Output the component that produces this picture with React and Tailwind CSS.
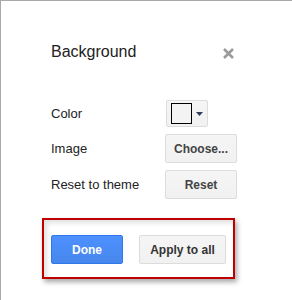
export default function App() {
  return (
    <div className="w-[292px] h-[300px] bg-white border-t border-l border-[#a9a9a9] pl-[50px] pt-[41px] font-['Liberation_Sans',Arial,sans-serif] overflow-hidden">
      <div className="flex items-start w-[183px] justify-between">
        <div className="text-[16px] leading-[20px] text-[#222]">Background</div>
        <svg className="mt-[6px]" width="11" height="11" viewBox="0 0 11 11">
          <path d="M1 1 L10 10 M10 1 L1 10" stroke="#9a9a9a" strokeWidth="2.6" />
        </svg>
      </div>
      <div className="mt-[38px] grid grid-cols-[114px_auto] gap-y-[7px] items-center text-[13px] text-[#222]">
        <div className="leading-none">Color</div>
        <div className="ml-px w-[42px] h-[27px] rounded-[2px] border border-[#dcdcdc] bg-gradient-to-b from-[#f5f5f5] to-[#f1f1f1] flex items-center pl-[4px]">
          <div className="w-[21px] h-[21px] border border-black bg-[#f3f3f3]"></div>
          <svg className="ml-[4px]" width="7" height="4" viewBox="0 0 7 4">
            <path d="M0 0 L7 0 L3.5 4 Z" fill="#2f3a5c" />
          </svg>
        </div>
        <div className="leading-none">Image</div>
        <div className="w-[72px] h-[29px] rounded-[2px] border border-[#dcdcdc] bg-gradient-to-b from-[#f5f5f5] to-[#f1f1f1] flex items-center justify-center text-[12px] font-bold text-[#444]">
          Choose...
        </div>
        <div className="leading-none">Reset to theme</div>
        <div className="w-[72px] h-[29px] rounded-[2px] border border-[#dcdcdc] bg-gradient-to-b from-[#f5f5f5] to-[#f1f1f1] flex items-center justify-center text-[12px] font-bold text-[#444]">
          Reset
        </div>
      </div>
      <div className="mt-[19px] -ml-[9px] w-[193px] h-[61px] border-2 border-[#c00000] shadow-[2px_3px_5px_rgba(0,0,0,0.35),inset_3px_3px_5px_rgba(0,0,0,0.12)] pl-[7px] pt-[15px] flex gap-[16px]">
        <div className="w-[72px] h-[29px] rounded-[2px] border border-[#3079ed] bg-gradient-to-b from-[#4d90fe] to-[#4787ed] flex items-center justify-center text-[12px] font-bold text-white">
          Done
        </div>
        <div className="w-[87px] h-[29px] rounded-[2px] border border-[#dcdcdc] bg-gradient-to-b from-[#f5f5f5] to-[#f1f1f1] flex items-center justify-center text-[12px] font-bold text-[#333]">
          Apply to all
        </div>
      </div>
    </div>
  );
}
